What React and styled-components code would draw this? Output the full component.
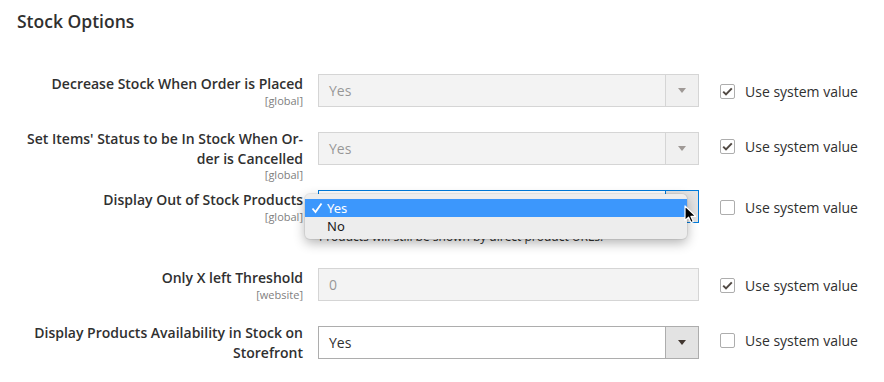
import React from 'react';
import styled, { createGlobalStyle } from 'styled-components';

const GlobalStyle = createGlobalStyle`
  * { box-sizing: border-box; }
  body {
    margin: 0;
    background: #fff;
    color: #303030;
    font-family: "Open Sans", "Liberation Sans", sans-serif;
  }
`;

const rows = [
  { label: 'Decrease Stock When Order is Placed', scope: 'global', kind: 'select', state: 'disabled', value: 'Yes', checked: true },
  { label: 'Set Items\' Status to be In Stock When Or\u00ADder is Cancelled', scope: 'global', kind: 'select', state: 'disabled', value: 'Yes', checked: true, multi: true },
  { label: 'Display Out of Stock Products', scope: 'global', kind: 'select', state: 'focus', value: '', checked: false, open: true,
    note: 'Products will still be shown by direct product URLs.' },
  { label: 'Only X left Threshold', scope: 'website', kind: 'input', state: 'disabled', value: '0', checked: true },
  { label: 'Display Products Availability in Stock on Storefront', scope: 'store view', kind: 'select', state: 'normal', value: 'Yes', checked: false, multi: true },
];

const App = () => {
  return (
    <>
      <GlobalStyle />
      <Page>
        <Title>Stock Options</Title>
        {rows.map((r) => (
          <Row key={r.label}>
            <Label>
              {r.label}
              <Scope>[{r.scope}]</Scope>
            </Label>
            <Control $multi={r.multi}>
              {r.kind === 'input' ? (
                <TextInput value={r.value} disabled readOnly />
              ) : (
                <SelectBox $state={r.state}>
                  <SelectValue>{r.value}</SelectValue>
                  <ArrowCell $state={r.state}><Caret /></ArrowCell>
                </SelectBox>
              )}
              {r.note && <Note>{r.note}</Note>}
              {r.open && (
                <>
                  <Menu>
                    <Option $active>
                      <Tick viewBox="0 0 12 12">
                        <path d="M1.5 6.5 L4.5 10 L10.5 1.5" />
                      </Tick>
                      Yes
                    </Option>
                    <Option>No</Option>
                  </Menu>
                  <Pointer viewBox="0 0 12 19">
                    <path d="M1 1 L1 15.5 L4.6 12.2 L7 17.6 L9.3 16.6 L7 11.4 L11.8 11.4 Z" />
                  </Pointer>
                </>
              )}
            </Control>
            <UseDefault>
              <Box>
                {r.checked && (
                  <svg width="11" height="9" viewBox="0 0 11 9">
                    <path d="M1.2 4.6 L4 7.4 L9.8 1.4" fill="none" stroke="#514943" strokeWidth="2" />
                  </svg>
                )}
              </Box>
              Use system value
            </UseDefault>
          </Row>
        ))}
      </Page>
    </>
  );
};

export default App

const Page = styled.div`
  padding: 11px 0 0 18px;
`;

const Title = styled.h2`
  margin: 0 0 21px -1px;
  font-size: 17.5px;
  line-height: 20px;
  font-weight: 600;
  color: #303030;
`;

const Row = styled.div`
  display: flex;
  align-items: flex-start;
  padding-top: 22px;
`;

const Label = styled.div`
  width: 300px;
  padding-right: 15px;
  text-align: right;
  font-size: 14px;
  line-height: 19.6px;
  font-weight: 600;
  color: #303030;
  hyphens: manual;
`;

const Scope = styled.span`
  display: block;
  height: 0;
  font-size: 11px;
  line-height: 13px;
  font-weight: 400;
  color: #808080;
`;

const Control = styled.div`
  position: relative;
  width: 381px;
  margin-top: ${(p) => (p.$multi ? '3px' : '0')};
`;

const borderFor = (s) => (s === 'focus' ? '#007bdb' : '#adadad');

const SelectBox = styled.div`
  display: flex;
  height: 33px;
  border: 1px solid ${(p) => borderFor(p.$state)};
  background: ${(p) => (p.$state === 'disabled' ? '#e9e9e9' : '#fff')};
  opacity: ${(p) => (p.$state === 'disabled' ? 0.5 : 1)};
`;

const SelectValue = styled.div`
  flex: 1;
  padding-left: 10px;
  font-size: 14px;
  line-height: 31px;
  color: #303030;
`;

const ArrowCell = styled.div`
  width: 33px;
  display: flex;
  align-items: center;
  justify-content: center;
  border-left: 1px solid ${(p) => borderFor(p.$state)};
  background: #e3e3e3;
`;

const Caret = styled.span`
  width: 0;
  height: 0;
  border-left: 4px solid transparent;
  border-right: 4px solid transparent;
  border-top: 5px solid #41362f;
`;

const TextInput = styled.input`
  display: block;
  width: 100%;
  height: 33px;
  margin: 0;
  padding: 0 10px;
  border: 1px solid #adadad;
  border-radius: 0;
  background: #e9e9e9;
  opacity: 0.5;
  font-family: "Open Sans", "Liberation Sans", sans-serif;
  font-size: 14px;
  color: #303030;
  -webkit-text-fill-color: #303030;
`;

const Note = styled.div`
  margin: 6px 0 1px 1px;
  font-size: 12px;
  line-height: 16px;
  color: #303030;
`;

const Menu = styled.div`
  position: absolute;
  left: -13px;
  top: 4px;
  width: 382px;
  padding: 5px 0 4px;
  background: #ededed;
  border-radius: 5px;
  box-shadow: 0 0 0 1px rgba(0, 0, 0, 0.06), 0 4px 12px rgba(0, 0, 0, 0.3);
  z-index: 2;
`;

const Option = styled.div`
  position: relative;
  height: 18px;
  padding-left: 22px;
  font-family: "Noto Sans", "Liberation Sans", sans-serif;
  font-size: 13px;
  line-height: 18px;
  color: ${(p) => (p.$active ? '#fff' : '#1a1a1a')};
  background: ${(p) => (p.$active ? '#3c97fc' : 'transparent')};
`;

const Tick = styled.svg`
  position: absolute;
  left: 6px;
  top: 3px;
  width: 12px;
  height: 12px;
  fill: none;
  stroke: #fff;
  stroke-width: 1.8;
`;

const Pointer = styled.svg`
  position: absolute;
  left: 366px;
  top: 15px;
  width: 12px;
  height: 19px;
  z-index: 3;
  fill: #000;
  stroke: #fff;
  stroke-width: 1.2;
  stroke-linejoin: round;
`;

const UseDefault = styled.label`
  display: flex;
  align-items: center;
  gap: 10px;
  margin-left: 21px;
  padding-top: 10px;
  font-size: 14px;
  line-height: 15px;
  color: #303030;
  white-space: nowrap;
`;

const Box = styled.span`
  width: 15px;
  height: 15px;
  display: flex;
  align-items: center;
  justify-content: center;
  border: 1px solid #adadad;
  border-radius: 2px;
  background: #fff;
`;
